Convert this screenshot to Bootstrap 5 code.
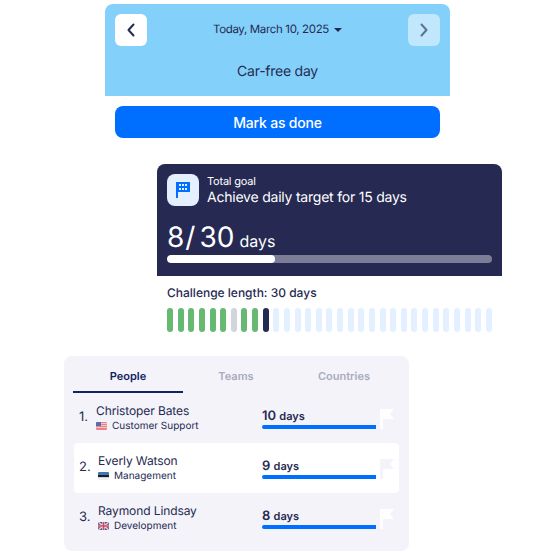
<!DOCTYPE html>
<html>
<head>
  <meta charset="UTF-8" />
  <title>Challenge</title>
  <link rel="stylesheet" href="https://cdn.jsdelivr.net/npm/bootstrap@5.3.0/dist/css/bootstrap.min.css" />
  <style>
    body { width: 556px; height: 556px; overflow: hidden; background: #fff; font-family: Inter, "Liberation Sans", sans-serif; color: #262a52; text-rendering: geometricPrecision; }
    .day-panel { width: 345px; height: 92px; margin: 4px 0 0 105px; padding: 10px; background: #83d0fa; border-radius: 8px 8px 0 0; }
    .nav-square { width: 32px; height: 32px; border-radius: 6px; background: #fff; border: 0; padding: 0; }
    .nav-square.dim { background: #c1e7fc; }
    .day-label { font-size: 11.5px; letter-spacing: -.35px; }
    .caret-down { width: 0; height: 0; border-left: 4px solid transparent; border-right: 4px solid transparent; border-top: 4px solid #262a52; margin-left: 5px; }
    .day-title { font-size: 14px; letter-spacing: -.25px; margin-top: 17px; line-height: 17px; }
    .done-btn { display: block; width: 325px; height: 32px; margin: 10px 0 0 115px; padding: 0; background: #006eff; border: 0; border-radius: 8px; font-size: 14px; font-weight: 500; letter-spacing: -.2px; color: #fff; }
    .goal-wrap { width: 345px; margin: 26px 0 0 157px; }
    .goal-panel { height: 112px; padding: 10px; background: #262a52; border-radius: 8px 8px 0 0; color: #fff; }
    .goal-icon { width: 32px; height: 32px; border-radius: 8px; background: #e4f0ff; }
    .goal-small { font-size: 11px; letter-spacing: -.2px; line-height: 13px; margin-top: 1px; }
    .goal-title { font-size: 14px; letter-spacing: -.22px; line-height: 18px; margin-top: 1px; }
    .goal-count { font-size: 28px; line-height: 36px; margin-top: 12px; height: 36px; }
    .goal-count .sep { margin: 0 4px 0 1px; }
    .goal-count .unit { font-size: 16px; margin-left: 5px; }
    .goal-track { height: 8px; border-radius: 4px; background: #7c7e97; overflow: hidden; }
    .goal-fill { height: 8px; background: #fff; border-radius: 4px; }
    .length-block { padding: 0 10px; margin-top: 9px; }
    .length-label { font-size: 12px; font-weight: 500; line-height: 15px; }
    .day-bars { margin-top: 8px; }
    .day-bar { width: 6px; height: 24px; border-radius: 3px; background: #e4f0ff; }
    .day-bar.ok { background: #67b971; }
    .day-bar.miss { background: #d3d4dc; }
    .day-bar.now { background: #262a52; }
    .board { width: 345px; height: 195px; margin: 24px 0 0 64px; padding: 0 10px; background: #f3f3f9; border-radius: 8px; }
    .board-tabs { height: 37px; }
    .board-tab { width: 110px; font-size: 11px; font-weight: 600; line-height: 13px; padding-top: 14px; text-align: center; color: #a9abc0; margin-right: -2px; }
    .board-tab.on { height: 37px; color: #0f2460; border-bottom: 2px solid #0f2460; margin-left: -1px; }
    .board-row { height: 50px; padding: 0 5px; border-radius: 4px; }
    .board-row.hl { background: #fff; }
    .rank { width: 17px; font-size: 13px; }
    .who { width: 166px; }
    .who.shifted { width: 164px; margin-left: 2px; }
    .who-name { font-size: 12px; letter-spacing: -.1px; line-height: 15px; }
    .who-team { font-size: 10px; line-height: 14px; margin-top: 1px; }
    .flag-mini { margin-right: 5px; border-radius: 1px; }
    .score { width: 114px; }
    .score-num { font-size: 13px; font-weight: 600; line-height: 16px; padding-top: 1px; }
    .score-num span { font-size: 11px; }
    .score-bar { height: 4px; margin-top: 1px; background: #006eff; border-radius: 2px 0 0 2px; }
    .goal-flag { margin-left: 4px; margin-top: 2px; }
  </style>
</head>
<body>
  <div class="day-panel text-center">
    <div class="d-flex justify-content-between align-items-center">
      <button class="nav-square d-flex align-items-center justify-content-center">
        <svg width="10" height="14" viewBox="0 0 10 14"><path d="M7.500 1.500 2.500 7l5 5.500" fill="none" stroke="#262a52" stroke-width="2" stroke-linecap="round" stroke-linejoin="round"/></svg>
      </button>
      <div class="d-flex align-items-center day-label">Today, March 10, 2025<span class="caret-down"></span></div>
      <button class="nav-square dim d-flex align-items-center justify-content-center">
        <svg width="10" height="14" viewBox="0 0 10 14"><path d="M2.500 1.500 7.500 7l-5 5.500" fill="none" stroke="#5b7296" stroke-width="2" stroke-linecap="round" stroke-linejoin="round"/></svg>
      </button>
    </div>
    <div class="day-title">Car-free day</div>
  </div>
  <button class="done-btn">Mark as done</button>

  <div class="goal-wrap">
    <div class="goal-panel">
      <div class="d-flex gap-2">
        <div class="goal-icon d-flex align-items-center justify-content-center">
          <svg width="14" height="16" viewBox="0 0 14 16">
            <path d="M0 0H14V10H2V16H0Z" fill="#006eff"/>
            <path d="M3 2h2v2H3zM6 2h2v2H6zM9 2h2v2H9zM3 6h2v2H3zM6 6h2v2H6zM9 6h2v2H9z" fill="#e4f0ff"/>
          </svg>
        </div>
        <div>
          <div class="goal-small">Total goal</div>
          <div class="goal-title">Achieve daily target for 15 days</div>
        </div>
      </div>
      <div class="goal-count">8<span class="sep">/</span>30<span class="unit">days</span></div>
      <div class="goal-track"><div class="goal-fill" style="width: 33.2%"></div></div>
    </div>
    <div class="length-block">
      <div class="length-label">Challenge length: 30 days</div>
      <div class="day-bars d-flex justify-content-between" id="dayBars"></div>
    </div>
  </div>

  <div class="board">
    <div class="board-tabs d-flex">
      <div class="board-tab on">People</div>
      <div class="board-tab">Teams</div>
      <div class="board-tab">Countries</div>
    </div>

    <div class="board-row d-flex align-items-center">
      <div class="rank">1.</div>
      <div class="who">
        <div class="who-name">Christoper Bates</div>
        <div class="who-team d-flex align-items-center">
          <svg class="flag-mini" width="11" height="8" viewBox="0 0 11 8"><rect width="11" height="8" fill="#e8838c"/><path d="M0 1.500h11M0 3.500h11M0 5.500h11" stroke="#f6d5d8" stroke-width=".8"/><rect width="5" height="4" fill="#5a6ba8"/></svg>Customer Support
        </div>
      </div>
      <div class="score">
        <div class="score-num">10 <span>days</span></div>
        <div class="score-bar"></div>
      </div>
      <svg class="goal-flag" width="14" height="20" viewBox="0 0 14 20"><path d="M0 0H14L10 5L14 10H3V20H0Z" fill="#fff"/></svg>
    </div>

    <div class="board-row hl d-flex align-items-center">
      <div class="rank">2.</div>
      <div class="who shifted">
        <div class="who-name">Everly Watson</div>
        <div class="who-team d-flex align-items-center">
          <svg class="flag-mini" width="11" height="8" viewBox="0 0 11 8"><rect width="11" height="2.700" fill="#3c78b8"/><rect y="2.700" width="11" height="2.700" fill="#1a1d2b"/><rect y="5.400" width="11" height="2.600" fill="#eef0f2"/></svg>Management
        </div>
      </div>
      <div class="score">
        <div class="score-num">9 <span>days</span></div>
        <div class="score-bar"></div>
      </div>
      <svg class="goal-flag" width="14" height="20" viewBox="0 0 14 20"><path d="M0 0H14L10 5L14 10H3V20H0Z" fill="#f3f3f9"/></svg>
    </div>

    <div class="board-row d-flex align-items-center">
      <div class="rank">3.</div>
      <div class="who shifted">
        <div class="who-name">Raymond Lindsay</div>
        <div class="who-team d-flex align-items-center">
          <svg class="flag-mini" width="11" height="8" viewBox="0 0 11 8"><rect width="11" height="8" fill="#4a5a98"/><path d="M0 0 11 8M11 0 0 8" stroke="#f0d5da" stroke-width="1.400"/><path d="M5.500 0v8M0 4h11" stroke="#f0d5da" stroke-width="2.600"/><path d="M5.500 0v8M0 4h11" stroke="#d2495c" stroke-width="1.400"/></svg>Development
        </div>
      </div>
      <div class="score">
        <div class="score-num">8 <span>days</span></div>
        <div class="score-bar"></div>
      </div>
      <svg class="goal-flag" width="14" height="20" viewBox="0 0 14 20"><path d="M0 0H14L10 5L14 10H3V20H0Z" fill="#fff"/></svg>
    </div>
  </div>

  <script>
    // 31 day markers: first ten already played, rest still open
    const states = ["ok", "ok", "ok", "ok", "ok", "ok", "miss", "ok", "ok", "now"];
    const dayBars = document.getElementById("dayBars");
    for (let i = 0; i < 31; i++) {
      const bar = document.createElement("div");
      bar.className = "day-bar " + (states[i] || "");
      dayBars.appendChild(bar);
    }
  </script>
  <script src="https://cdn.jsdelivr.net/npm/bootstrap@5.3.0/dist/js/bootstrap.bundle.min.js"></script>
</body>
</html>
